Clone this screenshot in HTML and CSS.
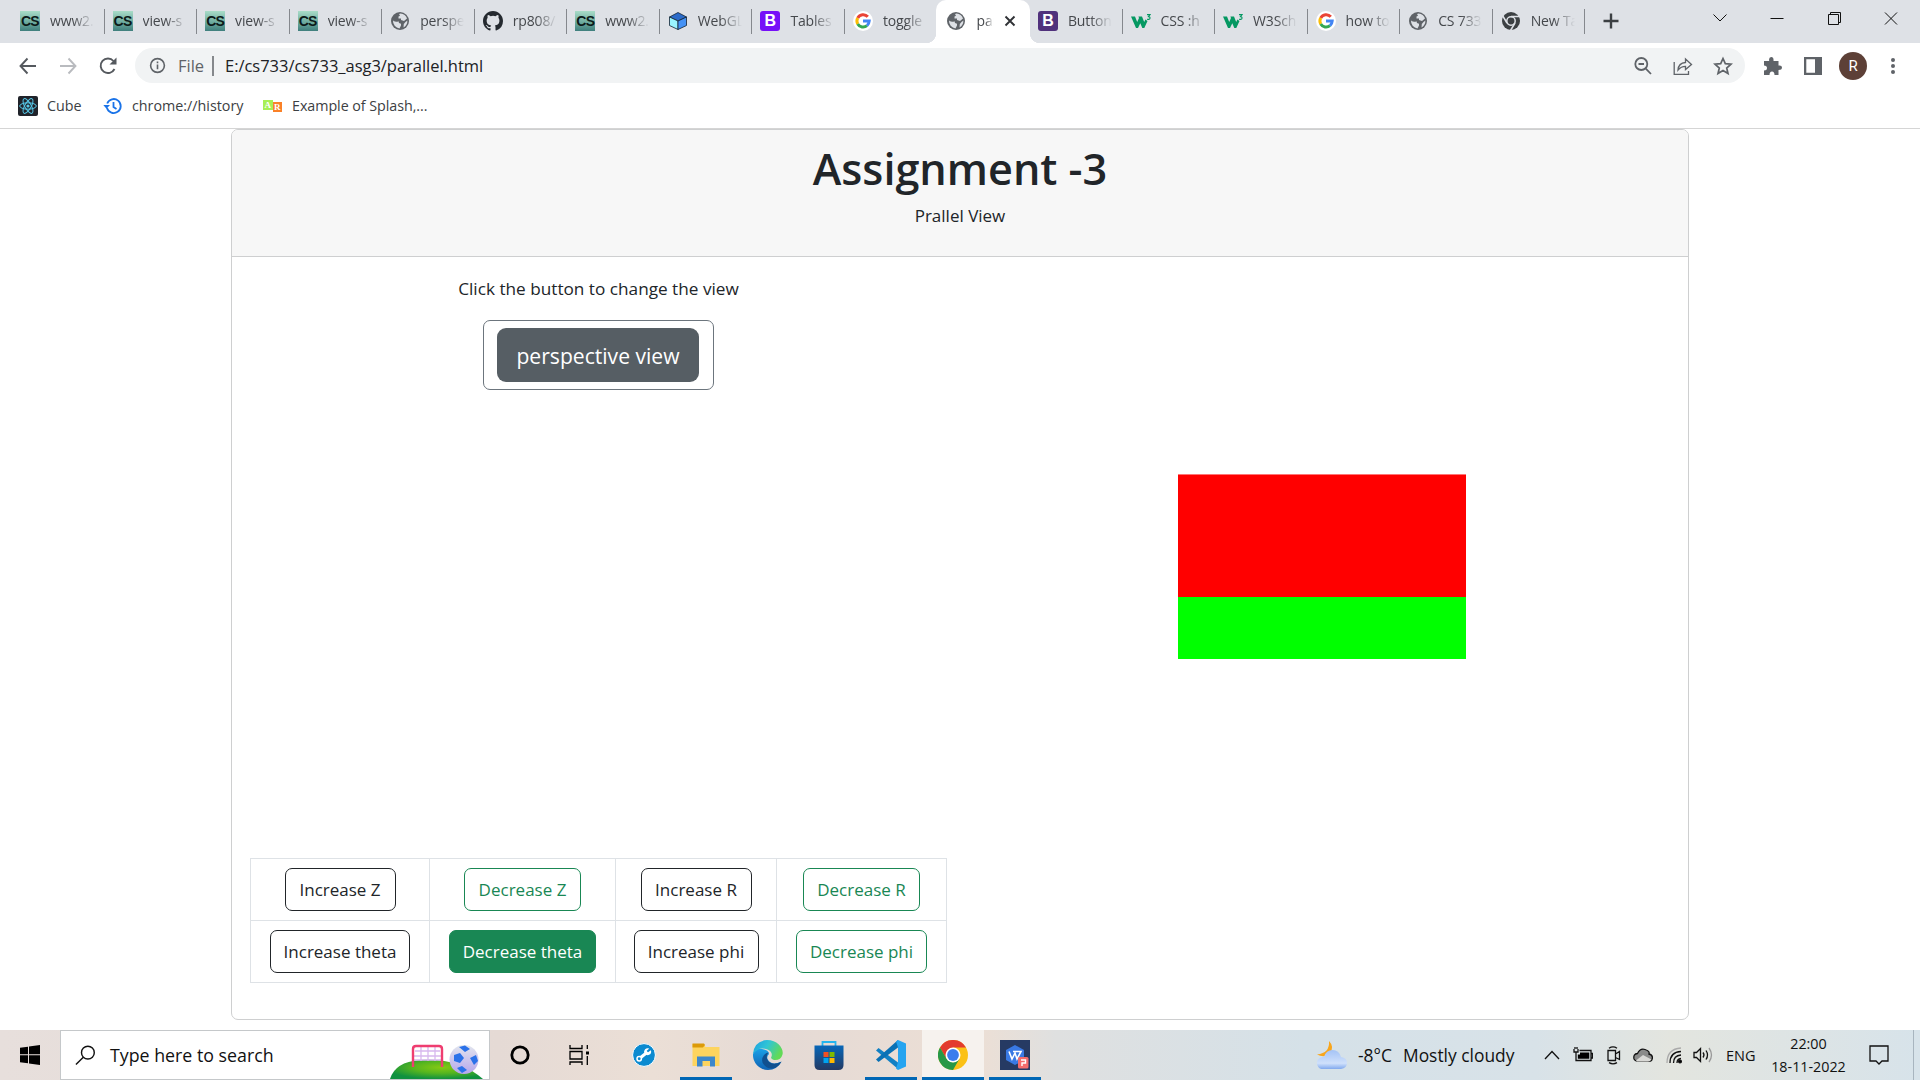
FILE: index.html
```html
<!DOCTYPE html>
<html lang="en">
<head>
<meta charset="utf-8">
<title>parallel.html</title>
<link rel="stylesheet" href="styles.css">
</head>
<body>
<svg class="defs" aria-hidden="true">
  <defs>
    <radialGradient id="hill" cx=".55" cy=".4" r=".6"><stop offset="0" stop-color="#84c913"/><stop offset=".5" stop-color="#56b51f"/><stop offset="1" stop-color="#10913f"/></radialGradient>
    <linearGradient id="edgeA" x1="0" y1="0" x2="1" y2=".4"><stop offset="0" stop-color="#1b9de2"/><stop offset=".5" stop-color="#30c5d6"/><stop offset="1" stop-color="#62da57"/></linearGradient>
    <linearGradient id="edgeB" x1="0" y1="0" x2="0" y2="1"><stop offset="0" stop-color="#1ba0e6"/><stop offset="1" stop-color="#0f62b3"/></linearGradient>
    <linearGradient id="store" x1="0" y1="0" x2="0" y2="1"><stop offset="0" stop-color="#0767b9"/><stop offset="1" stop-color="#243a63"/></linearGradient>
    <linearGradient id="cloud" x1="0" y1="0" x2="0" y2="1"><stop offset="0" stop-color="#a4c3f6"/><stop offset=".7" stop-color="#cfe0fb"/><stop offset="1" stop-color="#81a9ee"/></linearGradient>
    <linearGradient id="ball" x1="0" y1="0" x2="0" y2="1"><stop offset="0" stop-color="#e2e6ee"/><stop offset="1" stop-color="#b5a6ec"/></linearGradient>
  </defs>
  <symbol id="globe" viewBox="0 0 20 20"><circle cx="10" cy="10" r="9" fill="#5f6368"/><path d="M3 9.500Q6 11.500 8.500 10.200L9 12 11 12.800V14.500L9.500 17.400A7.500 7.500 0 0 1 3 9.500ZM9 3 10.500 2.600Q15.500 3 17 7.500L14 10 11 9V7.500H8.500V5.500L10 4.800ZM17.400 9.500Q17.500 14 13.500 16.500L13.800 13 15.500 11Z" fill="#dee1e6"/></symbol>
  <symbol id="google" viewBox="0 0 20 20"><circle cx="10" cy="10" r="10" fill="#fff"/><g fill="none" stroke-width="3"><path d="M14.800 5.800A6.200 6.200 0 0 0 4.700 7" stroke="#ea4335"/><path d="M4.700 7A6.300 6.300 0 0 0 4.700 13" stroke="#fbbc05"/><path d="M4.700 13A6.200 6.200 0 0 0 14 14.700" stroke="#34a853"/><path d="M10 10H16.200Q16 13 14 14.700" stroke="#4285f4"/></g></symbol>
  <symbol id="w3" viewBox="0 0 20 20"><path d="M0 5.500H4L6.200 11 8 7 7.400 5.500H11L13.200 11 14.300 8.500 16.500 10 13.300 17H11.300L9.300 12.200 7 17H5Z" fill="#059862"/><path d="M16 3.600H19L17.500 5.600Q19.200 5.700 19 7.200T16 8.300" fill="none" stroke="#059862" stroke-width="1.100"/></symbol>
  <symbol id="chrome" viewBox="0 0 30 30"><circle cx="15" cy="15" r="15" fill="#fbc116"/><path d="M2 7.500A15 15 0 0 1 28 7.500H15L8.500 19Z" fill="#e33b2e"/><path d="M2 7.500A15 15 0 0 0 15 30L21.500 18.800 15 22.500 8.500 18.800Z" fill="#279847"/><circle cx="15" cy="15" r="7.500" fill="#fff"/><circle cx="15" cy="15" r="5.900" fill="#3b7ded"/></symbol>
</svg>

<header class="browser">
  <div class="tabs">
    <div class="tab"><span class="cs">CS</span><span class="label">www2.</span></div>
    <div class="tab"><span class="cs">CS</span><span class="label">view-s</span></div>
    <div class="tab"><span class="cs">CS</span><span class="label">view-s</span></div>
    <div class="tab"><span class="cs">CS</span><span class="label">view-s</span></div>
    <div class="tab"><svg class="fav"><use href="#globe"/></svg><span class="label">perspe</span></div>
    <div class="tab"><svg class="fav" viewBox="0 0 16 16"><path fill="#24292f" d="M8 0C3.580 0 0 3.580 0 8c0 3.540 2.290 6.530 5.470 7.590.4.070.55-.17.55-.38v-1.490c-2.010.37-2.530-.49-2.690-.94-.09-.23-.48-.94-.82-1.130-.28-.15-.68-.52-.01-.53.63-.01 1.080.58 1.230.82.72 1.210 1.870.87 2.330.66.070-.52.28-.87.51-1.070-1.780-.2-3.640-.89-3.640-3.950 0-.87.31-1.590.82-2.150-.08-.2-.36-1.020.08-2.120 0 0 .67-.21 2.200.82a7.600 7.600 0 0 1 4 0c1.530-1.040 2.200-.82 2.200-.82.44 1.100.16 1.920.08 2.120.51.56.82 1.270.82 2.150 0 3.070-1.870 3.750-3.650 3.950.29.25.54.73.54 1.480v2.200c0 .21.15.46.55.38A8 8 0 0 0 16 8c0-4.420-3.580-8-8-8Z"/></svg><span class="label">rp808/</span></div>
    <div class="tab"><span class="cs">CS</span><span class="label">www2.</span></div>
    <div class="tab"><svg class="fav" viewBox="0 0 20 20" stroke="#123" stroke-width=".8" stroke-linejoin="round"><path d="M10 1.500 18.500 6 10 10 1.500 6Z" fill="#2b6bc9"/><path d="M1.500 6 10 10V18.500L1.500 14.500Z" fill="#9af5ff"/><path d="M18.500 6 10 10V18.500L18.500 14.500Z" fill="#4592f5"/></svg><span class="label">WebGL</span></div>
    <div class="tab"><span class="boot">B</span><span class="label">Tables</span></div>
    <div class="tab last"><svg class="fav"><use href="#google"/></svg><span class="label">toggle</span></div>
    <div class="tab active"><svg class="fav"><use href="#globe"/></svg><span class="label">par</span><svg class="close" viewBox="0 0 12 12"><path d="M1.500 1.500 10.500 10.500M10.500 1.500 1.500 10.500" stroke="#303236" stroke-width="1.900"/></svg></div>
    <div class="tab"><span class="boot dark">B</span><span class="label">Button</span></div>
    <div class="tab"><svg class="fav"><use href="#w3"/></svg><span class="label">CSS :h</span></div>
    <div class="tab"><svg class="fav"><use href="#w3"/></svg><span class="label">W3Sch</span></div>
    <div class="tab"><svg class="fav"><use href="#google"/></svg><span class="label">how to</span></div>
    <div class="tab"><svg class="fav"><use href="#globe"/></svg><span class="label">CS 733</span></div>
    <div class="tab"><svg class="fav" viewBox="0 0 20 20"><circle cx="10" cy="10" r="9" fill="#3c4043"/><circle cx="10" cy="10" r="4.200" fill="none" stroke="#dee1e6" stroke-width="1.500"/><path d="M10 5.500H18.500M6 12 1.800 5M14 12 9.500 19.500" stroke="#dee1e6" stroke-width="1.500"/></svg><span class="label">New Ta</span></div>
    <svg class="plus" viewBox="0 0 16 16"><path d="M8 .5V15.500M.5 8H15.500" stroke="#3c4043" stroke-width="2.400"/></svg>
    <div class="window">
      <svg viewBox="0 0 16 16"><path d="M1.500 4.500 8 11 14.500 4.500"/></svg>
      <svg viewBox="0 0 16 16"><path d="M1.500 8.500H14.500"/></svg>
      <svg viewBox="0 0 16 16"><path d="M2.500 4.500H12.500V14.500H2.500ZM4.500 4.500V2.500H14.500V12.500H12.500"/></svg>
      <svg viewBox="0 0 16 16"><path d="M2 2.500 14 14.500M14 2.500 2 14.500"/></svg>
    </div>
  </div>
  <div class="toolbar">
    <div class="nav">
      <svg viewBox="0 0 20 20"><path d="M18 10H3M9.500 2.500 2.500 10 9.500 17.500" stroke="#55595e"/></svg>
      <svg viewBox="0 0 20 20"><path d="M2 10H17M10.500 2.500 17.500 10 10.500 17.500" stroke="#b9bbbf"/></svg>
      <svg viewBox="0 0 20 20"><path d="M16.500 13A7.300 7.300 0 1 1 15.500 5" stroke="#55595e"/><path d="M18.500 1.500V8.500H11.500Z" fill="#55595e"/></svg>
    </div>
    <div class="omnibox">
      <svg class="info" viewBox="0 0 18 18"><circle cx="9" cy="9" r="7.300" fill="none" stroke="#5f6368" stroke-width="1.700"/><path d="M9 8V13M9 4.700V6.500" stroke="#5f6368" stroke-width="1.700"/></svg>
      <span class="scheme">File</span><span class="bar"></span><span class="url">E:/cs733/cs733_asg3/parallel.html</span>
      <div class="omni-icons">
        <svg viewBox="0 0 20 20"><circle cx="8.300" cy="8" r="6" stroke-width="1.800"/><path d="M5.500 8H11M12.800 12.600 18 18" stroke-width="1.800"/></svg>
        <svg viewBox="0 0 20 20"><path d="M1.200 6V18.300H15.500V15M5 14Q5.500 7 12.500 6.500V3L18.500 8.500 12.500 13.500V10.300Q8 10.300 5 14Z" stroke-width="1.300"/></svg>
        <svg viewBox="0 0 20 20"><path d="M10 2.500 12.300 7.700 18 8.200 13.700 12 15 17.600 10 14.600 5 17.600 6.300 12 2 8.200 7.700 7.700Z" stroke-width="1.700"/></svg>
      </div>
    </div>
    <div class="actions">
      <svg viewBox="0 0 20 20"><path fill="#5f6368" d="M1 5H6.200Q5.500 1 8.200 1T10.500 5H15.500V9.500Q19 9 19 11.500T15.500 14V19H11.500Q11.500 15.500 9 15.500T6.500 19H1V14.500Q4 14.500 4 12T1 9.500Z"/></svg>
      <svg viewBox="0 0 20 20"><path d="M1 1H19V19H1ZM3.300 3.300V16.700H12V3.300Z" fill="#5f6368" fill-rule="evenodd"/></svg>
      <span class="avatar">R</span>
      <svg viewBox="0 0 20 20"><g fill="#5f6368"><circle cx="10" cy="4" r="2"/><circle cx="10" cy="10" r="2"/><circle cx="10" cy="16" r="2"/></g></svg>
    </div>
  </div>
  <div class="bookmarks">
    <svg class="bm" viewBox="0 0 20 20"><rect width="20" height="20" rx="2" fill="#20232a"/><g fill="none" stroke="#56c8e8" stroke-width="1"><ellipse cx="10" cy="10" rx="8.300" ry="3.200"/><ellipse cx="10" cy="10" rx="8.300" ry="3.200" transform="rotate(60 10 10)"/><ellipse cx="10" cy="10" rx="8.300" ry="3.200" transform="rotate(120 10 10)"/></g><circle cx="10" cy="10" r="1.600" fill="#56c8e8"/></svg><span class="b1">Cube</span>
    <svg class="bm" viewBox="0 0 20 20"><path d="M4 12A7 7 0 1 0 4.200 7.500M10.500 6V11L13.500 13" fill="none" stroke="#1a73e8" stroke-width="1.800"/><path d="M.3 9H7L3.500 12.800Z" fill="#1a73e8"/></svg><span class="b2">chrome://history</span>
    <span class="ar"><i>A</i><i>R</i></span><span class="b3">Example of Splash,...</span>
  </div>
</header>

<main class="page">
  <section class="card">
    <div class="card-header"><h1>Assignment -3</h1><p>Prallel View</p></div>
    <div class="card-body">
      <div class="controls">
        <div class="switch">
          <p>Click the button to change the view</p>
          <div class="outline"><button class="large">perspective view</button></div>
        </div>
        <table>
          <colgroup><col class="c1"><col class="c2"><col class="c3"><col class="c4"></colgroup>
          <tr><td><button class="btn incz">Increase Z</button></td><td><button class="btn green decz">Decrease Z</button></td><td><button class="btn incz">Increase R</button></td><td><button class="btn green decz">Decrease R</button></td></tr>
          <tr><td><button class="btn inct">Increase theta</button></td><td><button class="btn solid dect">Decrease theta</button></td><td><button class="btn incp">Increase phi</button></td><td><button class="btn green decp">Decrease phi</button></td></tr>
        </table>
      </div>
      <div class="view"><div class="shape"></div></div>
    </div>
  </section>
</main>

<footer class="taskbar">
  <div class="start"><svg viewBox="0 0 20 20"><path d="M0 2.800 8 1.700V9.300H0ZM9 1.500 20 0V9.300H9ZM0 10.300H8V18.200L0 17.200ZM9 10.300H20V20L9 18.400Z"/></svg></div>
  <div class="search">
    <svg class="mag" viewBox="0 0 22 22"><circle cx="13.500" cy="8" r="6.700"/><path d="M8.700 12.800 1 20.500"/></svg>
    <span>Type here to search</span>
    <svg class="football" viewBox="0 0 94 36"><path d="M0 36Q5 19 30 17Q68 14 93 36Z" fill="url(#hill)"/><g fill="none"><path d="M25 8H50M24 13H51M24 17H51M31 4V18M38 4V18M45 4V18" stroke="#d7b8ee" stroke-width="1.300"/><path d="M23 24V6Q23 3 26 3H49Q52 3 52 6V24" stroke="#ef3d70" stroke-width="2.400"/></g><circle cx="74" cy="16.500" r="14.500" fill="url(#ball)"/><path d="M69 4 75 2.500 80 6 75 9ZM64 12 70 10 74 15 70 20 64 18ZM80 15 86 12 88 18 84 22ZM67 25 72 23 77 27 72 30Z" fill="#2b72e9"/></svg>
  </div>
  <div class="apps">
    <div class="app"><svg class="s20" viewBox="0 0 20 20"><circle cx="10" cy="10" r="8.200" fill="none" stroke="#000" stroke-width="2.800"/></svg></div>
    <div class="app task"><svg class="s20" viewBox="0 0 20 20"><path d="M1 0V3.500H13V0M1 6.500H13V14H1ZM1 20V17H13V20M18.300 0V4M18.300 11V20" fill="none" stroke="#000" stroke-width="1.300"/><path d="M17 6.500H20V9.500H17Z"/></svg></div>
    <div class="app"><svg class="s24" viewBox="0 0 24 24"><circle cx="12" cy="12" r="11.400" fill="#0b8ad0" stroke="#fff"/><path d="M7.500 15.500 15.500 9" stroke="#fff" stroke-width="3"/><circle cx="7.200" cy="15.700" r="2.200" fill="#0b8ad0" stroke="#fff" stroke-width="1.500"/><path d="M18.800 7.200 15.800 9.500 14.500 8 17.300 5.600A3.600 3.600 0 0 0 12.500 10.500Q15.500 13.500 18.500 11 20 9.500 18.800 7.200Z" fill="#fff"/></svg></div>
    <div class="app open"><svg class="s28" viewBox="0 0 28 28"><path d="M.5 3H12L13.500 6H27.500V25H.5Z" fill="#fdd45e"/><path d="M.5 2.500H12L13 4 11 6.500H.5Z" fill="#dc9a08"/><path d="M5 25.500V15.500H23V25.500H18V20H10.500V25.500Z" fill="#3d88ca"/></svg></div>
    <div class="app"><svg class="s30" viewBox="0 0 30 30"><path d="M0 14Q2 8 9 9Q16 10 16 14Q13 17 15 20Q19 26 28.500 21.500Q24 30 15 30A15 15 0 0 1 0 14Z" fill="url(#edgeB)"/><path d="M28.500 21.800Q23 31 14 27.500Q6 22 11 15Q13 12.500 15.500 12.500Q12 17 15.500 21.500Q20 26 28.500 21.800Z" fill="#11508f"/><path d="M0 14Q1 1 14 0C25 0 31 9 29.500 14.500Q28 20.500 21 20Q17 19 18.500 16.500Q20 12 14.500 9.500Q6 6 0 14Z" fill="url(#edgeA)"/></svg></div>
    <div class="app"><svg class="s30" viewBox="0 0 30 30"><path d="M8.500 7V2H21.500V7" fill="none" stroke="#24b5ee" stroke-width="1.800"/><path d="M.5 5.500H29.500V25Q29.500 30 24.500 30H5.500Q.5 30 .5 25Z" fill="url(#store)"/><path d="M9.500 12H14.500V17H9.500Z" fill="#f25022"/><path d="M15.500 12H20.500V17H15.500Z" fill="#7fba00"/><path d="M9.500 18H14.500V23H9.500Z" fill="#00a4ef"/><path d="M15.500 18H20.500V23H15.500Z" fill="#ffb900"/></svg></div>
    <div class="app open"><svg class="s30" viewBox="0 0 30 30"><path d="M0 10.500 2.500 8 22 22.500V29L0 10.500Z" fill="#1280c4"/><path d="M0 19.500 2.500 22 22 7.500V0L0 19.500Z" fill="#0a71b5"/><path d="M22 0 30 3.500V26.500L22 30 20 28.500 22 22V7.500L20 1.500Z" fill="#25a4f0"/></svg></div>
    <div class="app open current"><svg class="s30"><use href="#chrome"/></svg></div>
    <div class="app open wps"><svg class="s30" viewBox="0 0 30 30"><path d="M0 0H30V30H0Z" fill="#263a63"/><path d="M15 5 24 10V20L15 25 6 20V10Z" fill="#3979e4"/><path d="M9 11.500 12 19 15 13 17 19 21 11.500H13" fill="none" stroke="#fff" stroke-width="1.600"/><rect x="18" y="17" width="10.500" height="11.500" rx="1.500" fill="#f36c6c"/><path d="M21 20H25.500V23H22V26" fill="none" stroke="#fff" stroke-width="1.400"/></svg></div>
  </div>
  <div class="tray">
    <svg class="weather" viewBox="0 0 30 30"><path d="M12 1Q18 7 12.500 14Q7 18 0 14.500Q13 13 12 1Z" fill="#f8a51b"/><path d="M6 29A6 6 0 0 1 2 18.500Q4 16.500 7 17Q9 10 15.500 10T24 17Q30 18 30 23T24 29Z" fill="url(#cloud)"/></svg>
    <span class="temp">-8°C</span><span class="sky">Mostly cloudy</span>
    <svg class="chev" viewBox="0 0 18 18"><path d="M2 13 9 5.500 16 13"/></svg>
    <svg class="batt" viewBox="0 0 20 18"><path d="M6.500 4.500H18V14.500H3V9M18 7.500H19.500V12H18M1 3V6H5V3M2 3V1M4 3V1M3 6V9"/><path d="M7 6.500H16.300V12.800H4.800V8.500H7Z" fill="#000" stroke="none"/></svg>
    <svg class="cam" viewBox="0 0 16 20"><path d="M2 5.500H9.500V15.500H2ZM9.500 9 13.500 6.500V14.500L9.500 12.500M3 3.200Q7 .5 11 3.200M3 17.600Q7 20 11 17.600"/></svg>
    <svg class="onedrive" viewBox="0 0 20 16"><path d="M1 12Q0 7 4.500 6.500Q7 1 12 2.500T16 7Q20 8 19.300 11.500T15 14H4Q2 14 1 12Z" fill="#8a8b8a"/><path d="M3 13.500 10 8 18.500 12.500Q17 14.500 15 14.500H4Z" fill="#d9d9d6" stroke="none"/></svg>
    <svg class="wifi" viewBox="0 0 18 18"><path d="M2 17Q2 3 16 2" stroke="#aaa"/><path d="M5 17Q5 6 16 5.500M8.500 17Q8.500 9.500 16 9M12 17Q12 13 16 12.500"/><circle cx="15" cy="15.500" r="1.400" fill="#000"/></svg>
    <svg class="vol" viewBox="0 0 20 18"><path d="M1 6.500H3.500L7.500 2.500V15.500L3.500 11.500H1ZM10 6.500Q12 9 10 11.500M13 4.500Q16 9 13 13.500"/><path d="M16 2Q21 9 16 16" stroke="#999"/></svg>
    <span class="lang">ENG</span>
    <div class="clock"><span>22:00</span><span class="date">18-11-2022</span></div>
    <svg class="notif" viewBox="0 0 20 22"><path d="M1 2H19V17H13L10 20 7 17H1Z"/></svg>
    <span class="peek"></span>
  </div>
</footer>
</body>
</html>
```

FILE: styles.css
```css
* { box-sizing: border-box; }
body { margin: 0; width: 1920px; height: 1080px; overflow: hidden; display: flex; flex-direction: column; background: #fff; font-family: "Open Sans", "Noto Sans", sans-serif; color: #212529; }
.defs { position: absolute; width: 0; height: 0; }
svg { flex: none; display: block; }
span { white-space: nowrap; }

/* Browser chrome */
.browser { height: 129px; border-bottom: 1px solid #d5d5d5; flex: none; }
.tabs { display: flex; height: 43px; background: #dee1e6; padding-left: 11px; }
.tab { display: flex; align-items: center; gap: 10px; width: 92.55px; flex: none; padding: 0 9px 1px; position: relative; font-size: 14px; color: #45484c; }
.tab::after { content: ""; position: absolute; right: -1px; top: 9px; width: 1px; height: 25px; background: #85888d; }
.tab.last::after, .tab.active::after { display: none; }
.tab .label { width: 45px; flex: none; overflow: hidden; mask-image: linear-gradient(90deg, #000 50%, transparent 98%); letter-spacing: -.15px; line-height: 20px; }
.fav, .cs, .boot { width: 20px; height: 20px; flex: none; }
.cs { background: linear-gradient(#a9dcc8, #73b0a3 50%, #3f7f7d); color: #0c1a19; font: 700 14px/20px "Liberation Sans", sans-serif; text-align: center; letter-spacing: -.8px; }
.boot { background: #7610f8; border-radius: 3px; color: #fff; font: 700 16px/20px "Liberation Sans", sans-serif; text-align: center; }
.boot.dark { background: #50317c; }
.tab.active { background: #fff; border-radius: 10px 10px 0 0; width: 94px; margin-right: -1.5px; padding-left: 10px; }
.tab.active::before { content: ""; position: absolute; left: -10px; right: -10px; bottom: 0; height: 10px; background: radial-gradient(circle at 0 0, transparent 10px, #fff 10.5px) left / 10px 10px no-repeat, radial-gradient(circle at 100% 0, transparent 10px, #fff 10.5px) right / 10px 10px no-repeat; }
.tab.active .label { width: 18px; }
.close { width: 12px; height: 12px; }
.plus { width: 16px; height: 16px; margin: 13px 0 0 19px; }
.window { display: flex; gap: 41px; margin: 10px 21px 0 auto; }
.window svg { width: 16px; height: 16px; fill: none; stroke: #111; stroke-width: 1; }
.toolbar { display: flex; align-items: center; height: 45px; }
.nav { display: flex; gap: 20px; width: 135px; padding-left: 17.500px; }
.nav svg { width: 20px; height: 20px; fill: none; stroke-width: 1.9; }
.omnibox { display: flex; align-items: center; width: 1610px; height: 35px; border-radius: 18px; background: #f1f3f4; padding: 0 12px 0 14px; font-size: 16.5px; color: #202124; }
.info { width: 17px; height: 17px; }
.scheme { margin-left: 12px; width: 34px; color: #5f6368; }
.bar { width: 2px; height: 20px; background: #85888c; }
.url { margin-left: 11px; letter-spacing: -.03px; }
.omni-icons { display: flex; gap: 20px; margin-left: auto; }
.omni-icons svg { width: 20px; height: 20px; fill: none; stroke: #5f6368; }
.actions { display: flex; align-items: center; gap: 20px; padding-left: 18px; }
.actions svg { width: 20px; height: 20px; }
.actions svg:last-child { margin-left: -1px; }
.avatar { width: 28px; height: 28px; border-radius: 50%; background: #5d4037; color: #fff; font: 15px/28px Roboto, sans-serif; text-align: center; margin: 0 -3px 0 -4px; }
.bookmarks { display: flex; align-items: center; height: 36px; padding: 0 0 1px 18px; font-size: 14.300px; color: #3c4043; }
.bm { width: 20px; height: 20px; }
.b1 { width: 56px; margin-left: 9px; }
.b2 { width: 131px; margin-left: 9px; }
.ar { display: flex; width: 19px; height: 12px; font: 700 9px/10px "Liberation Serif", serif; color: #fff; }
.ar i { width: 9.500px; height: 10px; background: #a8ef55; font-style: normal; text-align: center; }
.ar i + i { background: #fa8128; margin-top: 2px; }
.b3 { margin-left: 10px; letter-spacing: -.05px; }

/* Page */
.page { flex: 1; display: flex; justify-content: center; }
.card { width: 1458px; height: 891px; border: 1px solid #cecfd0; border-radius: 7px; display: flex; flex-direction: column; overflow: hidden; }
.card-header { height: 127px; background: #f7f7f7; border-bottom: 1px solid #cecfd0; text-align: center; padding-top: 12px; }
p { margin: 0; font-size: 17.200px; line-height: 27px; }
.card-header p { font-size: 17px; }
h1 { margin: 0 0 6px; font-size: 43.200px; line-height: 54px; font-weight: 600; }
.card-body { flex: 1; padding: 18px; display: flex; gap: 27px; }
.controls { width: 697px; display: flex; flex-direction: column; justify-content: space-between; padding-bottom: 18px; }
.switch { display: flex; flex-direction: column; align-items: center; gap: 18px; }
.outline { width: 231px; height: 70px; border: 1px solid #6c757d; border-radius: 7px; display: flex; align-items: center; justify-content: center; padding-right: 1px; }
button { font-family: inherit; white-space: nowrap; padding: 0; }
.large { width: 202px; height: 54px; border: 0; border-radius: 9px; background: #565e64; color: #fff; font-size: 21.100px; }
table { border-collapse: collapse; width: 697px; table-layout: fixed; }
.c1 { width: 179px; } .c2 { width: 186px; } .c3 { width: 161px; }
td { height: 62px; border: 1px solid #dee2e6; padding: 0; text-align: center; vertical-align: middle; }
.btn { height: 43px; border: 1px solid #212529; border-radius: 7px; background: #fff; color: #212529; font-size: 17px; vertical-align: middle; }
.green { border-color: #198754; color: #198754; }
.solid { border-color: #198754; background: #198754; color: #fff; }
.incz { width: 111px; } .decz { width: 117px; } .inct { width: 140px; } .dect { width: 147px; } .incp { width: 125px; } .decp { width: 131px; }
.view { flex: 1; display: flex; justify-content: center; padding: 199px 1px 0 0; }
.shape { width: 288px; height: 185px; background: linear-gradient(#ff7474 1px, #f00 1px 123px, #0f0 123px); }

/* Taskbar */
.taskbar { height: 50px; flex: none; display: flex; background: linear-gradient(90deg, #e7dfdc, #e5dad5 26%, #ebdfd6 34%, #e5dad5 41%, #ecdfd5 51%, #dfe0e0 55%, #d5e1e8 68%, #d8e2e8 80%, #e3e5df 87%, #dde4e5 94%, #d7e3ea); color: #111; }
.start { width: 60px; padding: 15px 20px; }
.start svg { width: 20px; height: 20px; }
.search { width: 430px; display: flex; align-items: center; background: #fff; border: 1px solid #c5c8ca; padding-left: 14px; font-size: 17.800px; }
.mag { width: 21px; height: 21px; fill: none; stroke: #111; stroke-width: 1.500; }
.search span { margin-left: 14px; width: 281px; }
.football { width: 94px; height: 36px; align-self: flex-end; margin-left: -1px; }
.apps { display: flex; margin-left: -1px; }
.app { width: 61.900px; display: flex; align-items: center; justify-content: center; position: relative; }
.app.task { padding-right: 5px; }
.app.open::after { content: ""; position: absolute; bottom: 0; left: 5px; right: 5px; height: 3px; background: #0067b5; }
.app.current { background: #f6f2ee; }
.app.current::after { left: 0; right: 0; }
.s20 { width: 20px; height: 20px; } .s24 { width: 24px; height: 24px; } .s28 { width: 28px; height: 28px; } .s30 { width: 30px; height: 30px; }
.tray { display: flex; align-items: center; margin-left: auto; font-size: 17.400px; }
.tray svg { fill: none; stroke: #111; stroke-width: 1.300; }
.tray .weather { width: 30px; height: 30px; margin-right: 11px; stroke: none; }
.temp { width: 45px; } .sky { width: 140px; }
.chev { width: 18px; height: 18px; margin-right: 12px; }
.batt { width: 20px; height: 18px; margin-right: 13px; }
.cam { width: 16px; height: 20px; margin-right: 11px; }
.onedrive { width: 20px; height: 16px; margin-right: 12px; }
.wifi { width: 18px; height: 18px; margin-right: 10px; }
.vol { width: 20px; height: 18px; margin-right: 13px; }
.lang { font-size: 14.500px; width: 45px; }
.clock { display: flex; flex-direction: column; align-items: center; width: 75px; font-size: 14.300px; line-height: 23px; margin-right: 23px; }
.notif { width: 20px; height: 22px; margin-right: 24px; }
.peek { width: 7px; height: 50px; border-left: 1px solid #a8b5bf; }
```
